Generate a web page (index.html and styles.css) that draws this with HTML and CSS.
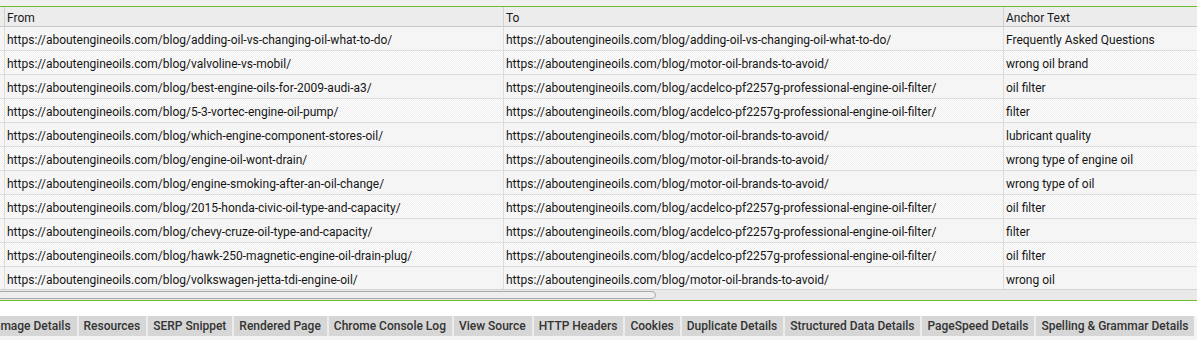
FILE: index.html
```html
<!DOCTYPE html>
<html lang="en">
<head>
  <meta charset="UTF-8">
  <title>Inlinks</title>
  <link rel="stylesheet" href="styles.css">
</head>
<body>
  <div class="top-strip"></div>

  <div class="grid-wrap">
    <table class="links">
      <thead>
        <tr>
          <th class="gutter"></th>
          <th class="col-from">From</th>
          <th class="col-to">To</th>
          <th class="col-anchor">Anchor Text</th>
        </tr>
      </thead>
      <tbody>
        <tr><td class="gutter"></td><td>https://aboutengineoils.com/blog/adding-oil-vs-changing-oil-what-to-do/</td><td>https://aboutengineoils.com/blog/adding-oil-vs-changing-oil-what-to-do/</td><td>Frequently Asked Questions</td></tr>
        <tr><td class="gutter"></td><td>https://aboutengineoils.com/blog/valvoline-vs-mobil/</td><td>https://aboutengineoils.com/blog/motor-oil-brands-to-avoid/</td><td>wrong oil brand</td></tr>
        <tr><td class="gutter"></td><td>https://aboutengineoils.com/blog/best-engine-oils-for-2009-audi-a3/</td><td>https://aboutengineoils.com/blog/acdelco-pf2257g-professional-engine-oil-filter/</td><td>oil filter</td></tr>
        <tr><td class="gutter"></td><td>https://aboutengineoils.com/blog/5-3-vortec-engine-oil-pump/</td><td>https://aboutengineoils.com/blog/acdelco-pf2257g-professional-engine-oil-filter/</td><td>filter</td></tr>
        <tr><td class="gutter"></td><td>https://aboutengineoils.com/blog/which-engine-component-stores-oil/</td><td>https://aboutengineoils.com/blog/motor-oil-brands-to-avoid/</td><td>lubricant quality</td></tr>
        <tr><td class="gutter"></td><td>https://aboutengineoils.com/blog/engine-oil-wont-drain/</td><td>https://aboutengineoils.com/blog/motor-oil-brands-to-avoid/</td><td>wrong type of engine oil</td></tr>
        <tr><td class="gutter"></td><td>https://aboutengineoils.com/blog/engine-smoking-after-an-oil-change/</td><td>https://aboutengineoils.com/blog/motor-oil-brands-to-avoid/</td><td>wrong type of oil</td></tr>
        <tr><td class="gutter"></td><td>https://aboutengineoils.com/blog/2015-honda-civic-oil-type-and-capacity/</td><td>https://aboutengineoils.com/blog/acdelco-pf2257g-professional-engine-oil-filter/</td><td>oil filter</td></tr>
        <tr><td class="gutter"></td><td>https://aboutengineoils.com/blog/chevy-cruze-oil-type-and-capacity/</td><td>https://aboutengineoils.com/blog/acdelco-pf2257g-professional-engine-oil-filter/</td><td>filter</td></tr>
        <tr><td class="gutter"></td><td>https://aboutengineoils.com/blog/hawk-250-magnetic-engine-oil-drain-plug/</td><td>https://aboutengineoils.com/blog/acdelco-pf2257g-professional-engine-oil-filter/</td><td>oil filter</td></tr>
        <tr><td class="gutter"></td><td>https://aboutengineoils.com/blog/volkswagen-jetta-tdi-engine-oil/</td><td>https://aboutengineoils.com/blog/motor-oil-brands-to-avoid/</td><td>wrong oil</td></tr>
      </tbody>
    </table>
  </div>

  <div class="hscroll">
    <div class="hscroll-thumb"></div>
  </div>

  <div class="spacer"></div>

  <div class="tabs">
    <span class="tab">Image Details</span>
    <span class="tab">Resources</span>
    <span class="tab">SERP Snippet</span>
    <span class="tab">Rendered Page</span>
    <span class="tab">Chrome Console Log</span>
    <span class="tab">View Source</span>
    <span class="tab">HTTP Headers</span>
    <span class="tab">Cookies</span>
    <span class="tab">Duplicate Details</span>
    <span class="tab">Structured Data Details</span>
    <span class="tab">PageSpeed Details</span>
    <span class="tab">Spelling &amp; Grammar Details</span>
  </div>
  <div class="bottom-strip"></div>
</body>
</html>
```

FILE: styles.css
```css
body {
  margin: 0;
  padding: 0;
  font-family: Roboto, 'Liberation Sans', sans-serif;
  font-size: 12px;
  color: #151515;
  background: #fff;
  overflow: hidden;
  width: 1197px;
  height: 340px;
}

.top-strip {
  height: 6px;
  background: #f0f0f0;
  border-bottom: 1px solid #6cbd2a;
}

.grid-wrap {
  height: 282px;
  overflow: hidden;
}

.links {
  border-collapse: separate;
  border-spacing: 0;
  table-layout: fixed;
  width: 1203px;
}

.links th,
.links td {
  box-sizing: border-box;
  padding: 2px 0 0 2px;
  text-align: left;
  white-space: nowrap;
  overflow: hidden;
}

.links th {
  height: 20px;
  background: #ececec;
  border-bottom: 1px solid #c9c9c9;
  border-left: 1px solid #d2d2d2;
  font-weight: normal;
  color: #1a1a1a;
}

.links td {
  height: 24px;
  border-bottom: 1px solid #dcdcdc;
  border-left: 1px solid #dcdcdc;
}

.links .gutter {
  width: 4px;
  padding: 0;
  border-left: none;
}

.col-from { width: 499px; }
.col-to { width: 500px; }
.col-anchor { width: 200px; }

.links tbody tr:nth-child(odd) td {
  background: #f5f5f5;
}

.links tbody tr:nth-child(even) td {
  background: repeating-conic-gradient(#eeeeee 0 25%, #fff 0 50%) 0 0 / 2px 2px;
}

.hscroll {
  height: 11px;
  box-sizing: border-box;
  background: #e9e9e9;
  border-top: 1px solid #d4d4d4;
  padding-top: 1px;
}

.hscroll-thumb {
  width: 660px;
  height: 8px;
  margin-left: -4px;
  border: 1px solid #a9a9a9;
  border-radius: 4px;
  background: #eeeeee;
  box-sizing: border-box;
}

.spacer {
  height: 15px;
  border-top: 1px solid #6cbd2a;
  background: #fff;
}

.tabs {
  display: flex;
  margin-left: -10px;
  height: 20px;
  white-space: nowrap;
  overflow: hidden;
  background: #f4f4f4;
}

.tab {
  flex: none;
  background: #d6d6d6;
  color: #333;
  font-weight: 500;
  padding: 0 6px 0 5px;
  line-height: 20px;
  border-left: 2px solid #ececec;
}

.bottom-strip {
  height: 4px;
  background: repeating-conic-gradient(#ececec 0 25%, #fafafa 0 50%) 0 0 / 2px 2px;
}
```
